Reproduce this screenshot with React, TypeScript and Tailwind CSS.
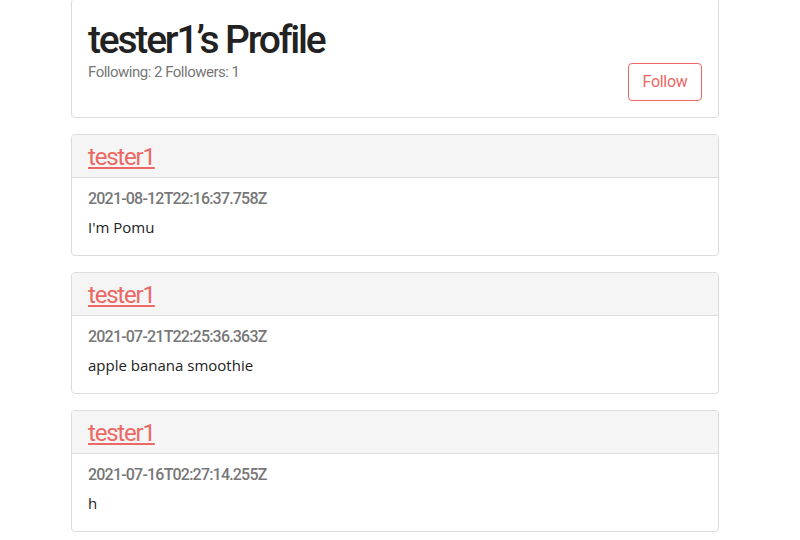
const posts = [
  { user: 'tester1', time: '2021-08-12T22:16:37.758Z', text: "I'm Pomu" },
  { user: 'tester1', time: '2021-07-21T22:25:36.363Z', text: 'apple banana smoothie' },
  { user: 'tester1', time: '2021-07-16T02:27:14.255Z', text: 'h' },
];

const narrow = "font-['Roboto',sans-serif]";

function PostCard({ user, time, text }: { user: string; time: string; text: string }) {
  return (
    <div className="h-[122px] rounded border border-[#dcdcdc] bg-white overflow-hidden">
      <div className="h-[43px] border-b border-[#dcdcdc] bg-[#f5f5f5] px-4 pt-[6px]">
        <a href="#" className={`${narrow} text-[24px] leading-[32px] tracking-[-1.2px] text-[#eb6864] underline`}>
          {user}
        </a>
      </div>
      <div className="px-4 pt-[10px]">
        <p className={`${narrow} text-[16px] leading-[22px] font-medium tracking-[-0.8px] text-[#777]`}>{time}</p>
        <p className="mt-[6px] font-['Open_Sans',sans-serif] text-[15px] leading-[22px] text-[#222]">{text}</p>
      </div>
    </div>
  );
}

export default function App() {
  return (
    <div className="min-h-[540px] bg-white">
      <div className="ml-[71px] w-[648px] flex flex-col gap-[16px]">
        <div className="-mt-[2px] h-[120px] rounded border border-[#dcdcdc] px-4 pt-[19px] flex justify-between">
          <div>
            <h1 className={`${narrow} text-[39px] leading-[44px] font-medium tracking-[-2.2px] text-[#222]`}>tester1’s Profile</h1>
            <p className={`${narrow} mt-[1px] text-[15px] leading-[18px] tracking-[-0.5px] text-[#777]`}>Following: 2 Followers: 1</p>
          </div>
          <div className="pt-[45px]">
            <button className={`${narrow} h-[38px] w-[74px] rounded border border-[#eb6864] text-[16px] tracking-[-0.3px] text-[#eb6864]`}>
              Follow
            </button>
          </div>
        </div>
        {posts.map((p) => (
          <PostCard key={p.time} {...p} />
        ))}
      </div>
    </div>
  );
}
